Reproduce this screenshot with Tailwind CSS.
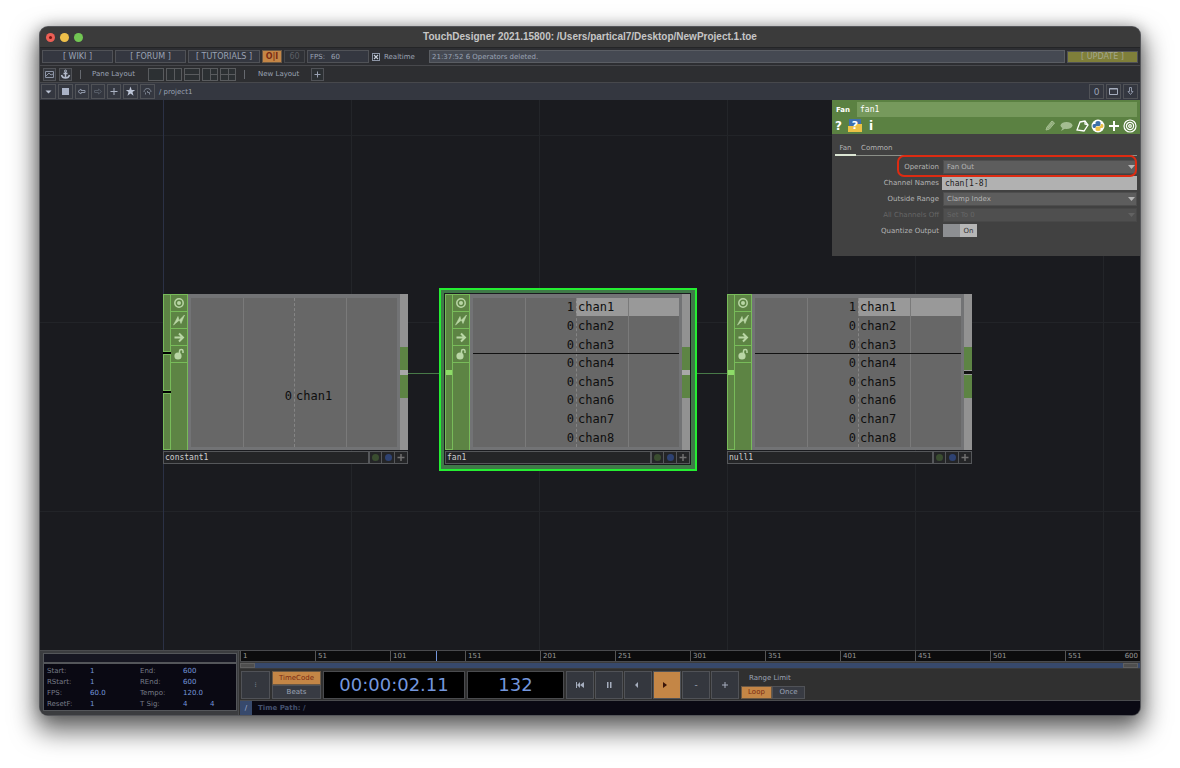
<!DOCTYPE html>
<html lang="en">

<head>
    <meta charset="UTF-8">
    <meta name="viewport" content="width=device-width, initial-scale=1.0">
    <title>TouchDesigner</title>
    <script src="https://cdn.jsdelivr.net/npm/@tailwindcss/browser@4"></script>
</head>

<body class="bg-white">
    <div class="min-h-screen flex flex-col px-10 pt-[27px] pb-[53px] overflow-hidden font-['DejaVu_Sans',sans-serif] text-[7px] leading-[10px] text-[#9ba3b4]">
        <div class="grow flex flex-col rounded-[8px] overflow-hidden bg-[#47484c] ring-1 ring-[#55565a] shadow-[0_12px_26px_4px_rgba(0,0,0,0.6),0_0_14px_rgba(0,0,0,0.25)]">

            <!-- title bar -->
            <header class="h-[21px] shrink-0 relative flex items-center justify-center bg-[#3b3b3b] border-b border-[#242527]">
                <div class="absolute left-[6px] flex gap-[5px]">
                    <button aria-label="Close" class="size-[9px] rounded-full bg-[#ec5f55] flex items-center justify-center"><span class="size-[3px] rounded-full bg-[#7c1410]"></span></button>
                    <button aria-label="Minimize" class="size-[9px] rounded-full bg-[#efc04a]"></button>
                    <button aria-label="Zoom" class="size-[9px] rounded-full bg-[#72c653]"></button>
                </div>
                <h1 class="font-['Liberation_Sans',sans-serif] font-bold text-[10px] text-[#c6c6c6]">TouchDesigner 2021.15800: /Users/partical7/Desktop/NewProject.1.toe</h1>
            </header>

            <!-- menu row -->
            <div class="h-[17px] shrink-0 flex items-center gap-[2px] px-[2px] bg-[#2d2e32]">
                <button class="w-[71px] h-[13px] bg-[#343740] border border-[#505257] text-[8px]">[ WIKI ]</button>
                <button class="w-[71px] h-[13px] bg-[#343740] border border-[#505257] text-[8px]">[ FORUM ]</button>
                <button class="w-[72px] h-[13px] bg-[#343740] border border-[#505257] text-[8px]">[ TUTORIALS ]</button>
                <button class="w-[20px] h-[13px] bg-[#c48646] border border-[#6b5844] text-[8px] font-bold text-[#7b2b12]">O|I</button>
                <button class="w-[21px] h-[13px] bg-[#2f3136] border border-[#45474b] text-[8px] text-[#5b5e65]">60</button>
                <label class="w-[62px] h-[13px] px-[2px] flex items-center gap-[6px] bg-[#343740] border border-[#505257]">FPS:
                    <input value="60" class="w-[30px] h-[10px] outline-none">
                </label>
                <label class="flex items-center gap-[4px] w-[56px] pl-px">
                    <input type="checkbox" checked class="appearance-none size-[8px] border border-[#8d95a6] bg-[#22262c]">
                    <svg class="size-[8px] -ml-3 pointer-events-none" viewBox="0 0 8 8"><path d="M2 2l4 4M6 2l-4 4" stroke="#c9cfda" stroke-width="1.2" /></svg>
                    Realtime
                </label>
                <div class="grow h-[13px] px-[2px] flex items-center bg-[#454952] border border-[#5a5d63]">21:37:52 6 Operators deleted.</div>
                <button class="w-[71px] h-[12px] bg-[#7f7f3a] border border-[#505257] text-[8px] text-[#a5a78d]">[ UPDATE ]</button>
            </div>

            <!-- pane layouts -->
            <div class="h-[16px] shrink-0 mt-px flex items-center px-[3px] bg-[#2d2e31]">
                <button aria-label="Palette" class="size-[13px] border border-[#505257] bg-[#34373d] mr-[3px]">
                    <svg viewBox="0 0 11 11" fill="none" stroke="#8d95a6"><path d="M1.5 2.5h8v6h-8zM2 7l3-3 2 2 2-1" /></svg>
                </button>
                <button aria-label="Anchor" class="size-[13px] border border-[#505257] bg-[#34373d]">
                    <svg viewBox="0 0 11 11" fill="none" stroke="#b4bccc"><circle cx="5.5" cy="2" r="1" /><path d="M5.500 3v6M3.500 4.500h4M1.500 6c.5 2 2 3 4 3s3.500-1 4-3" stroke-width="1.500" /></svg>
                </button>
                <span class="w-px h-[9px] ml-2 mr-[11px] bg-[#66696f]"></span>
                <span class="w-[56px]">Pane Layout</span>
                <div class="flex gap-[2px]">
                    <button aria-label="One pane" class="w-[16px] h-[13px] border border-[#595b5e] bg-[#2c3033]"></button>
                    <button aria-label="Left and right" class="w-[16px] h-[13px] border border-[#595b5e] bg-[#2c3033]"><svg viewBox="0 0 14 11" stroke="#595b5e"><path d="M7.500 0v11" /></svg></button>
                    <button aria-label="Top and bottom" class="w-[16px] h-[13px] border border-[#595b5e] bg-[#2c3033]"><svg viewBox="0 0 14 11" stroke="#595b5e"><path d="M0 5.500h14" /></svg></button>
                    <button aria-label="Three panes" class="w-[16px] h-[13px] border border-[#595b5e] bg-[#2c3033]"><svg viewBox="0 0 14 11" stroke="#595b5e"><path d="M7.500 0v11M7 5.500h7" /></svg></button>
                    <button aria-label="Four panes" class="w-[16px] h-[13px] border border-[#595b5e] bg-[#2c3033]"><svg viewBox="0 0 14 11" stroke="#595b5e"><path d="M7.500 0v11M0 5.500h14" /></svg></button>
                </div>
                <span class="w-px h-[9px] ml-2 mr-[13px] bg-[#66696f]"></span>
                <span class="w-[53px]">New Layout</span>
                <button aria-label="Add layout" class="size-[13px] border border-[#505257] bg-[#2c3033]">
                    <svg viewBox="0 0 11 11" stroke="#9aa2b3"><path d="M5.500 2.500v6M2.500 5.500h6" /></svg>
                </button>
            </div>

            <!-- network path -->
            <nav class="h-[17px] shrink-0 mt-px flex items-center gap-[2px] pl-px pr-[2px] bg-[#343740]">
                <button aria-label="Pane type" class="size-[15px] border border-[#505257]"><svg viewBox="0 0 13 13" fill="#b9c1d2"><path d="M3.500 5.500h6l-3 3z" /></svg></button>
                <button aria-label="Stop" class="size-[15px] border border-[#505257]"><svg viewBox="0 0 13 13" fill="#a9b2c6"><path d="M3 3h7v7H3z" /></svg></button>
                <button aria-label="Back" class="w-[14px] h-[15px] border border-[#505257]"><svg viewBox="0 0 12 13" fill="none" stroke="#8d95a6"><path d="M2 6.500l3-2.500v1.500h4v2H5v1.500z" /></svg></button>
                <button aria-label="Forward" class="w-[14px] h-[15px] border border-[#505257]"><svg viewBox="0 0 12 13" fill="none" stroke="#555b66"><path d="M9.500 6.500l-3-2.500v1.500h-4v2h4v1.500z" /></svg></button>
                <button aria-label="Add operator" class="w-[14px] h-[15px] border border-[#505257]"><svg viewBox="0 0 12 13" stroke="#aab2c2"><path d="M6 3v7M2.500 6.500h7" /></svg></button>
                <button aria-label="Bookmarks" class="size-[15px] border border-[#505257]"><svg viewBox="0 0 13 13" fill="#bcc4d6"><path d="M6.500 1.500l1.200 3.400h3.500L8.500 7.100l1 3.600-3-2.200-3 2.200 1-3.600L1.800 4.900h3.500z" /></svg></button>
                <button aria-label="Home" class="size-[15px] border border-[#505257]"><svg viewBox="0 0 13 13" fill="none" stroke="#7d8593"><path d="M3 7c0-2 1.500-3.500 3.500-3.500S10 5 10 7M4.500 9.500v-2M8.500 9.500v-2h-2V6" /></svg></button>
                <a href="#" class="grow pl-[2px]">/ project1</a>
                <button class="size-[15px] border border-[#505257] text-[9px]">0</button>
                <button aria-label="Maximize" class="size-[15px] border border-[#505257]"><svg viewBox="0 0 13 13" fill="none" stroke="#a5adbd"><path d="M2.500 3.500h8v6h-8zM2.500 4h8" /></svg></button>
                <button aria-label="Collapse" class="size-[15px] border border-[#505257]"><svg viewBox="0 0 13 13" fill="none" stroke="#8d95a6"><path d="M5.500 2.500h2v4H9L6.500 9.500 4 6.500h1.500z" /></svg></button>
            </nav>

            <!-- network editor -->
            <main class="grow relative overflow-hidden bg-[#1a1b1f]">
                <svg class="absolute inset-0 w-full h-full" fill="none">
                    <path d="M311.500 0v2000M499.500 0v2000M687.500 0v2000M875.500 0v2000M1063.500 0v2000" stroke="#232529" />
                    <path d="M0 35.500h3000M0 222.500h3000M0 411.500h3000" stroke="#222428" />
                    <path d="M123.500 0v2000" stroke="#2b3145" />
                    <path d="M368 273.500h37M650 273.500h40" stroke="#487a48" />
                </svg>
                <div class="absolute left-[399px] top-[188px] w-[258px] h-[183px] border-2 border-[#25ee32] bg-[#3f7a48]"></div>
                <div class="absolute left-[404px] top-[193px] w-[247px] h-[172px] bg-[#1a1b1f]"></div>
                <div id="nodes"></div>

                <!-- parameters -->
                <aside class="absolute right-0 top-0 w-[308px] h-[156px] bg-[#414141] text-[#b4b4b4]">
                    <div class="h-[34px] bg-[#5b8142] text-white">
                        <div class="flex items-center pt-[2px] px-[3px]">
                            <label for="opname" class="w-[22px] pl-px font-bold">Fan</label>
                            <input id="opname" value="fan1" class="w-0 grow h-[15px] px-[3px] bg-[#76995c] font-['DejaVu_Sans_Mono',monospace] text-[8px] outline-none">
                        </div>
                        <div class="flex items-center h-[17px] px-[3px]">
                            <button class="w-[13px] text-left text-[12px] font-bold">?</button>
                            <button aria-label="Python help" class="w-[14px] h-[13px] relative text-[11px] font-bold">
                                <svg class="absolute inset-0" viewBox="0 0 14 13"><path d="M1 0h12v7H7v2H1z" fill="#3f6fae" /><path d="M0 7h6l1-2h7v8H0z" fill="#ecc146" /></svg>
                                <span class="relative">?</span>
                            </button>
                            <button class="w-[18px] text-[12px] font-bold">i</button>
                            <div class="ml-auto flex gap-[2px]">
                                <button aria-label="Edit"><svg class="size-[14px]" viewBox="0 0 14 14" fill="none" stroke="#a4bd91"><path d="M3 11l1-3 5-6 2.500 2-5 6z" fill="#8dab76" /><path d="M5 9l4-5" /></svg></button>
                                <button aria-label="Comment"><svg class="size-[14px]" viewBox="0 0 14 14" fill="#a4bd91"><ellipse cx="7.500" cy="6.500" rx="6" ry="3.500" /><path d="M4 8l-2 4 5-3z" /></svg></button>
                                <button aria-label="Copy parameters"><svg class="size-[14px]" viewBox="0 0 14 14" fill="none" stroke="#fff" stroke-width="1.300"><path d="M5 3l5-1 3 4-4 6-7-1z" /><path d="M10 2v3l3 1" /></svg></button>
                                <button aria-label="Python"><svg class="size-[14px]" viewBox="0 0 14 14"><circle cx="7" cy="7" r="6.500" fill="#fff" /><path d="M4.500 5V3.500Q4.500 2 7 2t2.500 1.500V6Q9.500 7 8 7H6Q4.500 7 4.500 9H3Q1.500 9 1.500 7T3 5h4z" fill="#3d6fa9" /><path d="M9.500 9v1.500Q9.500 12 7 12t-2.500-1.500V9Q4.500 7.500 6 7.500h2Q10 7.500 10 5h1q1.500 0 1.500 2T11 9H7z" fill="#ecc146" /></svg></button>
                                <button aria-label="Add"><svg class="size-[14px]" viewBox="0 0 14 14" stroke="#fff" stroke-width="2"><path d="M7 2v10M2 7h10" /></svg></button>
                                <button aria-label="Target"><svg class="size-[14px]" viewBox="0 0 14 14" fill="none" stroke="#fff" stroke-width="1.200"><circle cx="7" cy="7" r="6" /><circle cx="7" cy="7" r="3.600" /><circle cx="7" cy="7" r="1.300" /></svg></button>
                            </div>
                        </div>
                    </div>
                    <div class="mx-[3px] mt-[7px] h-[15px] flex border-b border-[#8b8f88]">
                        <button class="w-[21px] h-[15px] border-b-2 border-[#dce6d4]">Fan</button>
                        <button class="ml-[5px] h-[13px]">Common</button>
                    </div>
                    <form class="pt-[4px] px-[3px] flex flex-col gap-[2px]">
                        <div class="flex items-center relative">
                            <label for="operation" class="w-[104px] text-right mr-[4px]">Operation</label>
                            <select id="operation" class="appearance-none w-0 grow h-[14px] px-[3px] bg-[#5d5d5d] border border-[#4d4d4d]"><option>Fan Out</option></select>
                            <svg class="absolute right-[1px] top-[4px] w-[9px] h-[6px]" viewBox="0 0 9 6"><path d="M1 1h7L4.500 5z" fill="#b5b5b5" /></svg>
                        </div>
                        <div class="flex items-center">
                            <label for="names" class="w-[104px] text-right mr-[3px]">Channel Names</label>
                            <input id="names" value="chan[1-8]" class="w-0 grow h-[14px] px-[3px] bg-[#b1b1b1] text-[#1c1c1c] font-['DejaVu_Sans_Mono',monospace] text-[8px] outline-none">
                        </div>
                        <div class="flex items-center relative">
                            <label for="range" class="w-[104px] text-right mr-[4px]">Outside Range</label>
                            <select id="range" class="appearance-none w-0 grow h-[14px] px-[3px] bg-[#5d5d5d] border border-[#4d4d4d]"><option>Clamp Index</option></select>
                            <svg class="absolute right-[1px] top-[4px] w-[9px] h-[6px]" viewBox="0 0 9 6"><path d="M1 1h7L4.500 5z" fill="#b5b5b5" /></svg>
                        </div>
                        <div class="flex items-center relative text-[#666]">
                            <label for="alloff" class="w-[104px] text-right mr-[4px]">All Channels Off</label>
                            <select id="alloff" disabled class="appearance-none w-0 grow h-[14px] px-[3px] bg-[#4f4f4f] border border-[#484848] opacity-100"><option>Set To 0</option></select>
                            <svg class="absolute right-[1px] top-[4px] w-[9px] h-[6px]" viewBox="0 0 9 6"><path d="M1 1h7L4.500 5z" fill="#626262" /></svg>
                        </div>
                        <div class="flex items-center">
                            <span class="w-[104px] text-right mr-[4px]">Quantize Output</span>
                            <button type="button" class="w-[34px] h-[13px] pl-[17px] bg-linear-to-r from-[#8d8f92] from-50% to-[#b6b6b6] to-50% text-[#333]">On</button>
                        </div>
                    </form>
                    <div class="absolute left-[65px] right-[3px] top-[55px] h-[22px] border-2 border-[#dd2b12] rounded-[7px] pointer-events-none"></div>
                </aside>
            </main>

            <!-- timeline -->
            <footer class="h-[65px] shrink-0 flex bg-[#303030] border-t border-[#4a4b4e]">
                <section class="w-[199px] shrink-0 p-[3px] pt-[2px] pr-px bg-[#3b3c3f] border-r border-[#4a4b4e]">
                    <div class="h-[10px] bg-[#171722] border border-[#54565a]"></div>
                    <div class="h-[48px] px-[3px] pt-[2px] bg-[#0a0913] border border-[#54565a] grid grid-cols-[43px_50px_43px_27px_1fr] grid-rows-4 text-[#777c88]">
                        <span>Start:</span><span class="text-[#7496dc]">1</span><span>End:</span><span class="text-[#7496dc]">600</span><span></span>
                        <span>RStart:</span><span class="text-[#7496dc]">1</span><span>REnd:</span><span class="text-[#7496dc]">600</span><span></span>
                        <span>FPS:</span><span class="text-[#7496dc]">60.0</span><span>Tempo:</span><span class="text-[#7496dc]">120.0</span><span></span>
                        <span>ResetF:</span><span class="text-[#7496dc]">1</span><span>T Sig:</span><span class="text-[#7496dc]">4</span><span class="text-[#7496dc]">4</span>
                    </div>
                </section>
                <section class="grow flex flex-col pl-px">
                    <div class="relative h-[11px] grid grid-cols-12 bg-[#0c0c0d] border-b border-[#4a4b4e] text-[#999]">
                        <span class="border-l border-[#555] pl-[2px]">1</span>
                        <span class="border-l border-[#555] pl-[2px]">51</span>
                        <span class="border-l border-[#555] pl-[2px]">101</span>
                        <span class="border-l border-[#555] pl-[2px]">151</span>
                        <span class="border-l border-[#555] pl-[2px]">201</span>
                        <span class="border-l border-[#555] pl-[2px]">251</span>
                        <span class="border-l border-[#555] pl-[2px]">301</span>
                        <span class="border-l border-[#555] pl-[2px]">351</span>
                        <span class="border-l border-[#555] pl-[2px]">401</span>
                        <span class="border-l border-[#555] pl-[2px]">451</span>
                        <span class="border-l border-[#555] pl-[2px]">501</span>
                        <span class="border-l border-[#555] pl-[2px] pr-[2px] flex justify-between"><span>551</span><span>600</span></span>
                        <i class="absolute top-0 h-[10px] w-px bg-[#7496dc]" style="left: 21.8%"></i>
                    </div>
                    <div class="h-[7px] flex border-y border-[#3b3b3b] bg-[#37496c]">
                        <span class="w-[15px] bg-[#4e4e4e] border border-[#606060]"></span>
                        <span class="w-[15px] ml-auto mr-[2px] bg-[#4e4e4e] border border-[#606060]"></span>
                    </div>
                    <div class="grow flex items-center gap-[2px] pl-px border-b border-[#4a4b4e]">
                        <button class="w-[29px] h-[28px] bg-[#34373e] border border-[#505257]">⁝</button>
                        <div class="w-[49px] flex flex-col">
                            <button class="h-[14px] bg-[#c48646] border border-[#6b5844] text-[#7b2b12]">TimeCode</button>
                            <button class="h-[14px] bg-[#383b43] border border-[#505257]">Beats</button>
                        </div>
                        <output class="w-[142px] h-[28px] flex items-center justify-center bg-black border border-[#4a4b4e] text-[18px] text-[#7496dc]">00:00:02.11</output>
                        <output class="w-[97px] h-[28px] flex items-center justify-center bg-black border border-[#4a4b4e] text-[18px] text-[#7496dc]">132</output>
                        <div class="flex gap-px">
                            <button aria-label="Rewind" class="size-[28px] bg-[#34373e] border border-[#505257]"><svg viewBox="0 0 26 26" fill="#a5adbd"><path d="M9 10h1v6H9zM13 10v6l-3-3zM17 10v6l-4-3z" /></svg></button>
                            <button aria-label="Pause" class="size-[28px] bg-[#34373e] border border-[#505257]"><svg viewBox="0 0 26 26" fill="#a5adbd"><path d="M11 10h1.500v6H11zM14 10h1.500v6H14z" /></svg></button>
                            <button aria-label="Play reverse" class="size-[28px] bg-[#34373e] border border-[#505257]"><svg viewBox="0 0 26 26" fill="#a5adbd"><path d="M13 10v6l-3-3z" /></svg></button>
                            <button aria-label="Play" class="size-[28px] bg-[#c48646] border border-[#505257]"><svg viewBox="0 0 26 26" fill="#3a1408"><path d="M9 10v6l4-3z" /></svg></button>
                            <button class="size-[28px] bg-[#34373e] border border-[#505257] text-[9px]">-</button>
                            <button aria-label="Step forward" class="size-[28px] bg-[#34373e] border border-[#505257]"><svg viewBox="0 0 26 26" stroke="#a5adbd"><path d="M13 10v6M10 13h6" /></svg></button>
                        </div>
                        <div class="w-[64px] h-[28px] flex flex-col justify-between">
                            <span class="pt-[2px] pl-2">Range Limit</span>
                            <div class="flex">
                                <button class="w-[31px] h-[13px] bg-[#c48646] border border-[#6b5844] text-[#7b2b12]">Loop</button>
                                <button class="w-[33px] h-[13px] bg-[#383b43] border border-[#505257]">Once</button>
                            </div>
                        </div>
                    </div>
                    <div class="h-[14px] flex items-center bg-[#0a0913] text-[#56668d]">
                        <span class="w-[12px] h-full flex items-center justify-center bg-[#37496c] text-[#a5b3d2]">/</span>
                        <span class="pl-[6px] font-bold text-[#44516f]">Time Path: /</span>
                    </div>
                </section>
            </footer>
        </div>
    </div>

    <script>
        const fanOut = [1, 0, 0, 0, 0, 0, 0, 0];

        const nodes = [
            { name: 'constant1', left: 123, values: [0], inputs: 3, linked: true },
            { name: 'fan1', left: 405, values: fanOut, inputs: 1, linked: true },
            { name: 'null1', left: 687, values: fanOut, inputs: 1, linked: false },
        ];

        const flags = [
            ['Viewer', '<circle cx="8" cy="8" r="4.200" fill="none" stroke="#b9d6a5" stroke-width="1.500"/><circle cx="8" cy="8" r="2"/>'],
            ['Bypass', '<path d="M2.500 13L7 4.500l1 4L13.500 3 10 11.500 8.500 8z" stroke="#b9d6a5" stroke-width=".6"/>'],
            ['Export', '<path d="M3.500 8.500h8M8 4.500l4 4-4 4" fill="none" stroke="#b9d6a5" stroke-width="2"/>'],
            ['Lock', '<circle cx="7" cy="10" r="3.600"/><path d="M8.500 8V5c0-2 3.500-2 3.500 0v2" fill="none" stroke="#b9d6a5" stroke-width="1.500"/>'],
        ];

        function inputStrip(node) {
            if (node.inputs === 3) {
                return `
                    <span class="h-[58px] border border-[#78bb5a] bg-[#5d8444]"></span>
                    <span class="h-[37px] border border-[#78bb5a] bg-[#5d8444]"></span>
                    <span class="grow border border-[#78bb5a] bg-[#5d8444]"></span>`
            }
            return `
                <span class="grow border border-[#78bb5a] bg-[#5d8444] flex items-center">
                    <i class="w-full h-[5px] bg-[#8edb68]"></i>
                </span>`
        }

        function channels(values) {
            return values.map((v, i) => `
                <div class="flex-1 flex items-center">
                    <span class="w-1/2 pr-[2px] text-right">${v}</span>
                    <span class="w-1/2 h-[18px] pl-[2px] flex items-center ${v ? 'bg-[#999999]' : ''}">chan${i + 1}</span>
                </div>`).join('')
        }

        document.getElementById('nodes').innerHTML = nodes.map(node => `
            <div class="absolute top-[194px] w-[245px]" style="left: ${node.left}px">
                <div class="h-[156px] flex bg-[#727375]">
                    <div class="w-[8px] flex flex-col gap-[2px] bg-black">${inputStrip(node)}</div>
                    <div class="w-[17px] bg-[#5d8444] border-r border-t border-[#78bb5a]">
                        ${flags.map(([label, icon]) => `<button aria-label="${label}" class="block w-[16px] h-[17px] border-b border-[#78bb5a]"><svg viewBox="0 0 16 16" fill="#b9d6a5">${icon}</svg></button>`).join('')}
                    </div>
                    <div class="grow p-[3px] pt-[4px]">
                        <div class="relative h-[149px] flex flex-col bg-[#676767] font-['DejaVu_Sans_Mono',monospace] text-[12px] text-[#0e0e0e] ${node.values.length === 1 ? 'pt-[46px]' : ''}">
                            ${channels(node.values)}
                            <i class="absolute inset-y-0 left-1/4 w-px bg-[#7a7a7a]"></i>
                            <i class="absolute inset-y-0 left-1/2 border-l border-dashed border-[#858585]"></i>
                            <i class="absolute inset-y-0 left-3/4 w-px bg-[#7a7a7a]"></i>
                            ${node.values.length > 1 ? '<i class="absolute inset-x-0 top-[37%] h-px bg-[#111]"></i>' : ''}
                        </div>
                    </div>
                    <div class="w-[8px] flex flex-col justify-center bg-[#929292]">
                        <span class="h-[23px] bg-[#5d8444]"></span>
                        <span class="h-[5px] ${node.linked ? 'bg-[#a8a8a8]' : 'border-y border-[#999] bg-[#111]'}"></span>
                        <span class="h-[23px] bg-[#5d8444]"></span>
                    </div>
                </div>
                <div class="h-[13px] mt-px flex bg-[#242527] border border-[#55575a]">
                    <span class="grow pl-px font-['DejaVu_Sans_Mono',monospace] text-[8px] leading-[11px] text-[#cfcfcf]">${node.name}</span>
                    <button aria-label="Display" class="w-[13px] border-l-2 border-[#55575a] flex items-center justify-center"><span class="size-[7px] rounded-full bg-[#3a4d30]"></span></button>
                    <button aria-label="Render" class="w-[13px] border-l border-[#55575a] flex items-center justify-center"><span class="size-[7px] rounded-full bg-[#2e4272]"></span></button>
                    <button aria-label="Activate" class="w-[13px] border-l border-[#55575a]"><svg viewBox="0 0 12 11" stroke="#707070" stroke-width="1.500"><path d="M6 2v7M2.500 5.500h7" /></svg></button>
                </div>
            </div>`).join('');
    </script>
</body>

</html>
